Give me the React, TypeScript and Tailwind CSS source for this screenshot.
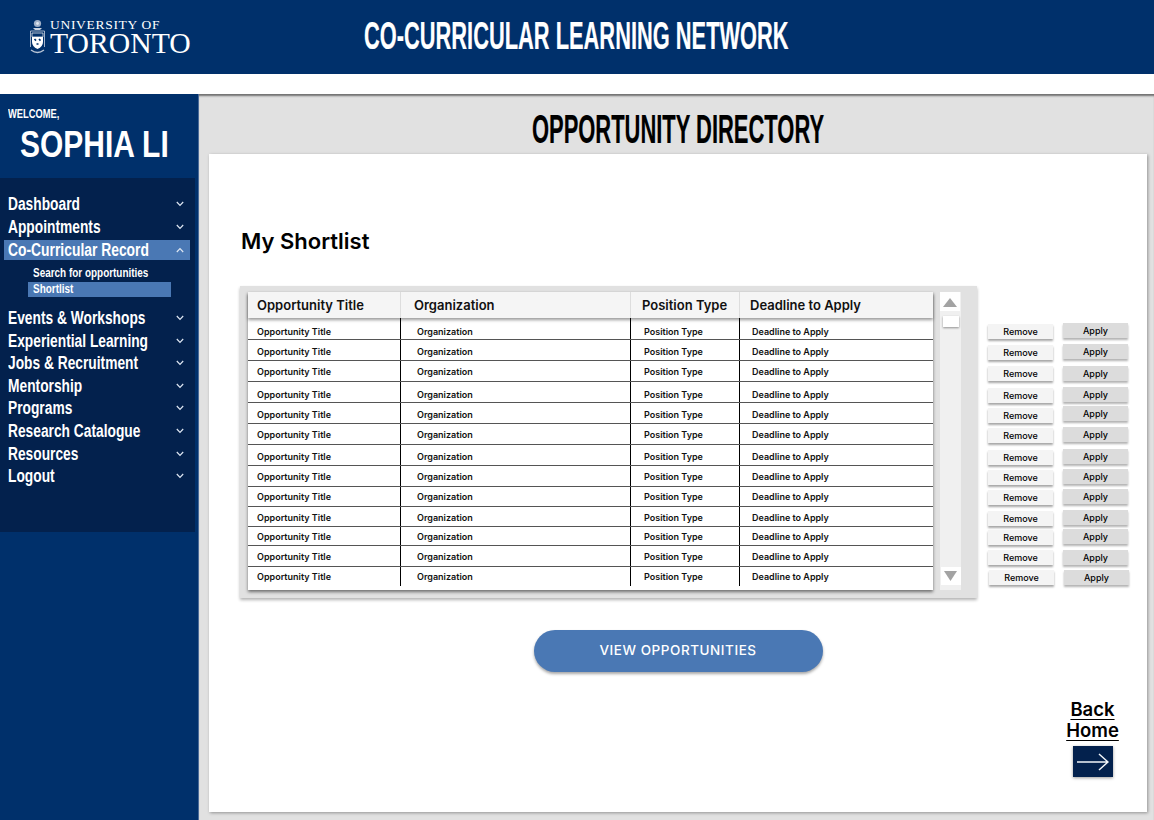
import React from "react";

const narrow = "font-['Liberation_Sans',sans-serif] font-bold text-white whitespace-nowrap";

const rows = [
  { h: "h-[22px]", pt: "pt-[7px]" },
  { h: "h-[21px]", pt: "pt-[5px]" },
  { h: "h-[21px]", pt: "pt-[4px]" },
  { h: "h-[21px]", pt: "pt-[6px]" },
  { h: "h-[21px]", pt: "pt-[5px]" },
  { h: "h-[21px]", pt: "pt-[4px]" },
  { h: "h-[21px]", pt: "pt-[5px]" },
  { h: "h-[21px]", pt: "pt-[4px]" },
  { h: "h-[20px]", pt: "pt-[3px]" },
  { h: "h-[20px]", pt: "pt-[4px]" },
  { h: "h-[19px]", pt: "pt-[3px]" },
  { h: "h-[21px]", pt: "pt-[4px]" },
  { h: "h-[23px] pb-[4px]", pt: "pt-[3px]" },
];

const removeRows = ["h-[21px]", "h-[21px]", "h-[22px]", "h-[20px]", "h-[20px]", "h-[22px]", "h-[20px]", "h-[20px]", "h-[21px]", "h-[19px]", "h-[20px]", "h-[20px]", "h-[20px] pl-[1px]"];
const applyRows = ["h-[21px]", "h-[22px]", "h-[21px]", "h-[19px]", "h-[21px]", "h-[22px]", "h-[20px]", "h-[20px]", "h-[21px]", "h-[19px]", "h-[21px]", "h-[20px]", "h-[20px] pl-[1px]"];

const nav1 = ["Dashboard", "Appointments"];
const nav2 = [
  "Events & Workshops",
  "Experiential Learning",
  "Jobs & Recruitment",
  "Mentorship",
  "Programs",
  "Research Catalogue",
  "Resources",
  "Logout",
];

function Chevron({ up = false }: { up?: boolean }) {
  return (
    <svg className="shrink-0" width="8" height="6" viewBox="0 0 8 6" fill="none" stroke="#dfe7f2" strokeWidth="1.2">
      <path d={up ? "M0.8 5 L4 1.6 L7.2 5" : "M0.8 1 L4 4.4 L7.2 1"} />
    </svg>
  );
}

function NavItem({ label }: { label: string }) {
  return (
    <div className="h-[22.6px] flex items-center justify-between pl-[8px] pr-[3px] w-[187px]">
      <span className={`${narrow} block w-[150px] origin-left scale-x-[0.765] text-[18px] leading-none`}>{label}</span>
      <Chevron />
    </div>
  );
}

function Crest() {
  return (
    <svg className="shrink-0" width="15" height="36" viewBox="0 0 15 36" fill="none">
      <circle cx="7.5" cy="4.5" r="3.6" fill="#9fb0c8" />
      <circle cx="7.5" cy="4.5" r="1.4" fill="#dfe6ef" />
      <path d="M3 9 H12 L10 11 H5 Z" fill="#c8d2e0" />
      <path d="M0.5 12 H14.5 V28" stroke="#c8d2e0" strokeWidth="0.8" />
      <path d="M0.5 12 V28" stroke="#c8d2e0" strokeWidth="0.8" />
      <path d="M2 14 H13 V23 Q13 27.5 7.5 30 Q2 27.5 2 23 Z" fill="#ffffff" />
      <path d="M2 14 H13 V18 H2 Z" fill="#00306b" stroke="#ffffff" strokeWidth="0.7" />
      <path d="M4.5 20 l1.5 1.6 M9 20 l1.5 1.6 M6.5 25 h2" stroke="#00306b" strokeWidth="1.6" />
      <path d="M1 31 Q7.5 36 14 31" stroke="#b7c4d6" strokeWidth="1.3" />
    </svg>
  );
}

function Cell({ w, x, pt, children, line = true }: { w: string; x: string; pt: string; children: string; line?: boolean }) {
  return (
    <div
      className={`${w} ${x} ${pt} ${line ? "border-r border-black" : ""} h-full shrink-0 text-[9px] leading-[14px] font-semibold text-[#111] whitespace-nowrap`}
    >
      {children}
    </div>
  );
}

function HeadCell({ w, x, children, line = true }: { w: string; x: string; children: string; line?: boolean }) {
  return (
    <div
      className={`${w} ${x} ${line ? "border-r border-[#dddddd]" : ""} h-full shrink-0 flex items-center pt-[2px] text-[13px] font-semibold text-[#111] whitespace-nowrap`}
    >
      {children}
    </div>
  );
}

export default function App() {
  return (
    <div className="w-[1154px] h-[820px] overflow-hidden bg-white flex flex-col font-['Inter','Liberation_Sans',sans-serif]">
      <header className="h-[74px] shrink-0 bg-[#00306b] flex items-center">
        <div className="w-[364px] shrink-0 flex items-center pl-[30px] gap-[5px]">
          <Crest />
          <div className="font-['Liberation_Serif',serif] text-white flex flex-col -mt-[1px]">
            <span className="block text-[13.5px] leading-[13px] tracking-[0.7px] whitespace-nowrap translate-y-[1px]">UNIVERSITY OF</span>
            <span className="block text-[29.7px] leading-[26px] whitespace-nowrap">TORONTO</span>
          </div>
        </div>
        <h1 className={`${narrow} text-[39px] leading-none w-[425px] origin-left scale-x-[0.56] pb-[4px] [-webkit-text-stroke:0.2px_#ffffff]`}>
          CO-CURRICULAR LEARNING NETWORK
        </h1>
      </header>
      <div className="h-[20px] shrink-0 bg-white" />
      <div className="flex-1 flex min-h-0">
        <aside className="w-[198px] shrink-0 bg-[#00306b] pt-[12px] border-r border-[#4a6a98] box-content">
          <div className={`${narrow} text-[13.5px] leading-[16px] ml-[8px] w-[60px] origin-left scale-x-[0.69]`}>WELCOME,</div>
          <div className={`${narrow} text-[37px] leading-[40px] ml-[20px] mt-[3px] w-[160px] origin-left scale-x-[0.81]`}>SOPHIA LI</div>
          <nav className="mt-[13px] w-[195px] h-[354px] bg-[#03214d] pt-[15px]">
            {nav1.map((l) => (
              <NavItem key={l} label={l} />
            ))}
            <div className="h-[20px] w-[186px] ml-[4px] mt-[2px] bg-[#4a78b4] flex items-center justify-between pl-[4px] pr-[6px]">
              <span className={`${narrow} block w-[150px] origin-left scale-x-[0.77] text-[18px] leading-none`}>Co-Curricular Record</span>
              <Chevron up />
            </div>
            <div className={`${narrow} text-[12.5px] leading-none ml-[33px] mt-[7px] h-[13px] w-[130px] origin-left scale-x-[0.795]`}>
              Search for opportunities
            </div>
            <div className="ml-[28px] mt-[2px] mb-[9.6px] w-[143px] h-[15px] bg-[#4a78b4] pl-[5px]">
              <div className={`${narrow} text-[12.5px] leading-[15px] w-[100px] origin-left scale-x-[0.795]`}>Shortlist</div>
            </div>
            {nav2.map((l) => (
              <NavItem key={l} label={l} />
            ))}
          </nav>
        </aside>
        <main className="flex-1 min-w-0 bg-[#e1e1e1] shadow-[inset_0_3px_2px_-1px_rgba(0,0,0,0.5)] flex flex-col items-start pl-[10px]">
          <h2 className="font-['Liberation_Sans',sans-serif] w-[938px] h-[60px] text-center text-black font-bold text-[41px] leading-[70px] whitespace-nowrap scale-x-[0.535] [-webkit-text-stroke:0.2px_#000000]">
            OPPORTUNITY DIRECTORY
          </h2>
          <section className="w-[938px] h-[658px] bg-white shadow-[1px_1px_3px_rgba(0,0,0,0.35)] pl-[31px] flex flex-col">
            <h3 className="mt-[73px] ml-[1px] h-[28px] text-[22px] leading-[28px] font-semibold text-black">My Shortlist</h3>
            <div className="mt-[31px] flex items-start">
              <div className="w-[737px] h-[312px] bg-[#e1e1e1] shadow-[0_2px_3px_rgba(0,0,0,0.3)] pl-[8px] pt-[6px] flex gap-[7px]">
                <div className="w-[685px] h-[298px] bg-white shadow-[0_2px_3px_rgba(0,0,0,0.5)] flex flex-col">
                  <div className="h-[26px] shrink-0 bg-[#f5f5f5] shadow-[0_2px_3px_rgba(0,0,0,0.4)] flex">
                    <HeadCell w="w-[153px]" x="pl-[9px]">Opportunity Title</HeadCell>
                    <HeadCell w="w-[230px]" x="pl-[13px]">Organization</HeadCell>
                    <HeadCell w="w-[109px]" x="pl-[11px]">Position Type</HeadCell>
                    <HeadCell w="w-[193px]" x="pl-[10px]" line={false}>Deadline to Apply</HeadCell>
                  </div>
                  {rows.map((r, i) => (
                    <div key={i} className={`${r.h} shrink-0 flex ${i < 12 ? "border-b border-[#555555]" : ""}`}>
                      <Cell w="w-[153px]" x="pl-[9px]" pt={r.pt}>Opportunity Title</Cell>
                      <Cell w="w-[230px]" x="pl-[16px]" pt={r.pt}>Organization</Cell>
                      <Cell w="w-[109px]" x="pl-[13px]" pt={r.pt}>Position Type</Cell>
                      <Cell w="w-[193px]" x="pl-[12px]" pt={r.pt} line={false}>Deadline to Apply</Cell>
                    </div>
                  ))}
                </div>
                <div className="w-[21px] h-[298px] bg-[#f0f0f0] flex flex-col items-center justify-between">
                  <div className="w-full">
                    <div className="w-[20px] h-[19px] bg-white flex items-center justify-center">
                      <svg width="14" height="10" viewBox="0 0 14 10"><path d="M7 1 L14 10 H0 Z" fill="#a3a3a3" /></svg>
                    </div>
                    <div className="w-[16px] h-[11px] mx-auto mt-[5px] bg-white shadow-[0_1px_2px_rgba(0,0,0,0.4)]" />
                  </div>
                  <div className="w-[20px] h-[18px] mb-[5px] bg-white flex items-center justify-center">
                    <svg width="13" height="10" viewBox="0 0 13 10"><path d="M0 0 H13 L6.5 10 Z" fill="#a3a3a3" /></svg>
                  </div>
                </div>
              </div>
              <div className="pl-[11px] flex gap-[9px]">
                <div className="flex flex-col pt-[38px]">
                  {removeRows.map((c, i) => (
                    <div key={i} className={c}>
                      <button className="block w-[65px] h-[15px] bg-[#f4f4f4] shadow-[0_2px_2px_rgba(0,0,0,0.35)] text-[9px] leading-[15px] font-medium text-black text-center">
                        Remove
                      </button>
                    </div>
                  ))}
                </div>
                <div className="flex flex-col pt-[37px]">
                  {applyRows.map((c, i) => (
                    <div key={i} className={c}>
                      <button className="block w-[65px] h-[15px] bg-[#dcdcdc] shadow-[0_2px_2px_rgba(0,0,0,0.3)] text-[9px] leading-[14px] font-medium text-black text-center">
                        Apply
                      </button>
                    </div>
                  ))}
                </div>
              </div>
            </div>
            <div className="w-[876px] flex justify-center mt-[32px]">
              <button className="w-[289px] h-[42px] rounded-[21px] bg-[#4a78b4] shadow-[0_2px_3px_rgba(0,0,0,0.35)] text-white text-[13.5px] font-medium tracking-[0.55px] pb-[2px]">
                VIEW OPPORTUNITIES
              </button>
            </div>
            <div className="w-[878px] flex justify-end mt-[27px]">
              <div className="w-[51px] flex flex-col items-center">
                <div className="text-[18.5px] leading-[21px] font-semibold text-black text-center underline underline-offset-[3px]">Back</div>
                <div className="text-[18.5px] leading-[21px] font-semibold text-black text-center underline underline-offset-[3px]">Home</div>
                <div className="w-[40px] h-[31px] mt-[5px] bg-[#03214d] shadow-[0_1px_3px_rgba(0,0,0,0.4)] flex items-center justify-center">
                  <svg width="32" height="18" viewBox="0 0 32 18" fill="none" stroke="#f2f5f9" strokeWidth="1.5">
                    <path d="M0 9 H31 M22 1 L31 9 L22 17" />
                  </svg>
                </div>
              </div>
            </div>
          </section>
        </main>
      </div>
    </div>
  );
}
